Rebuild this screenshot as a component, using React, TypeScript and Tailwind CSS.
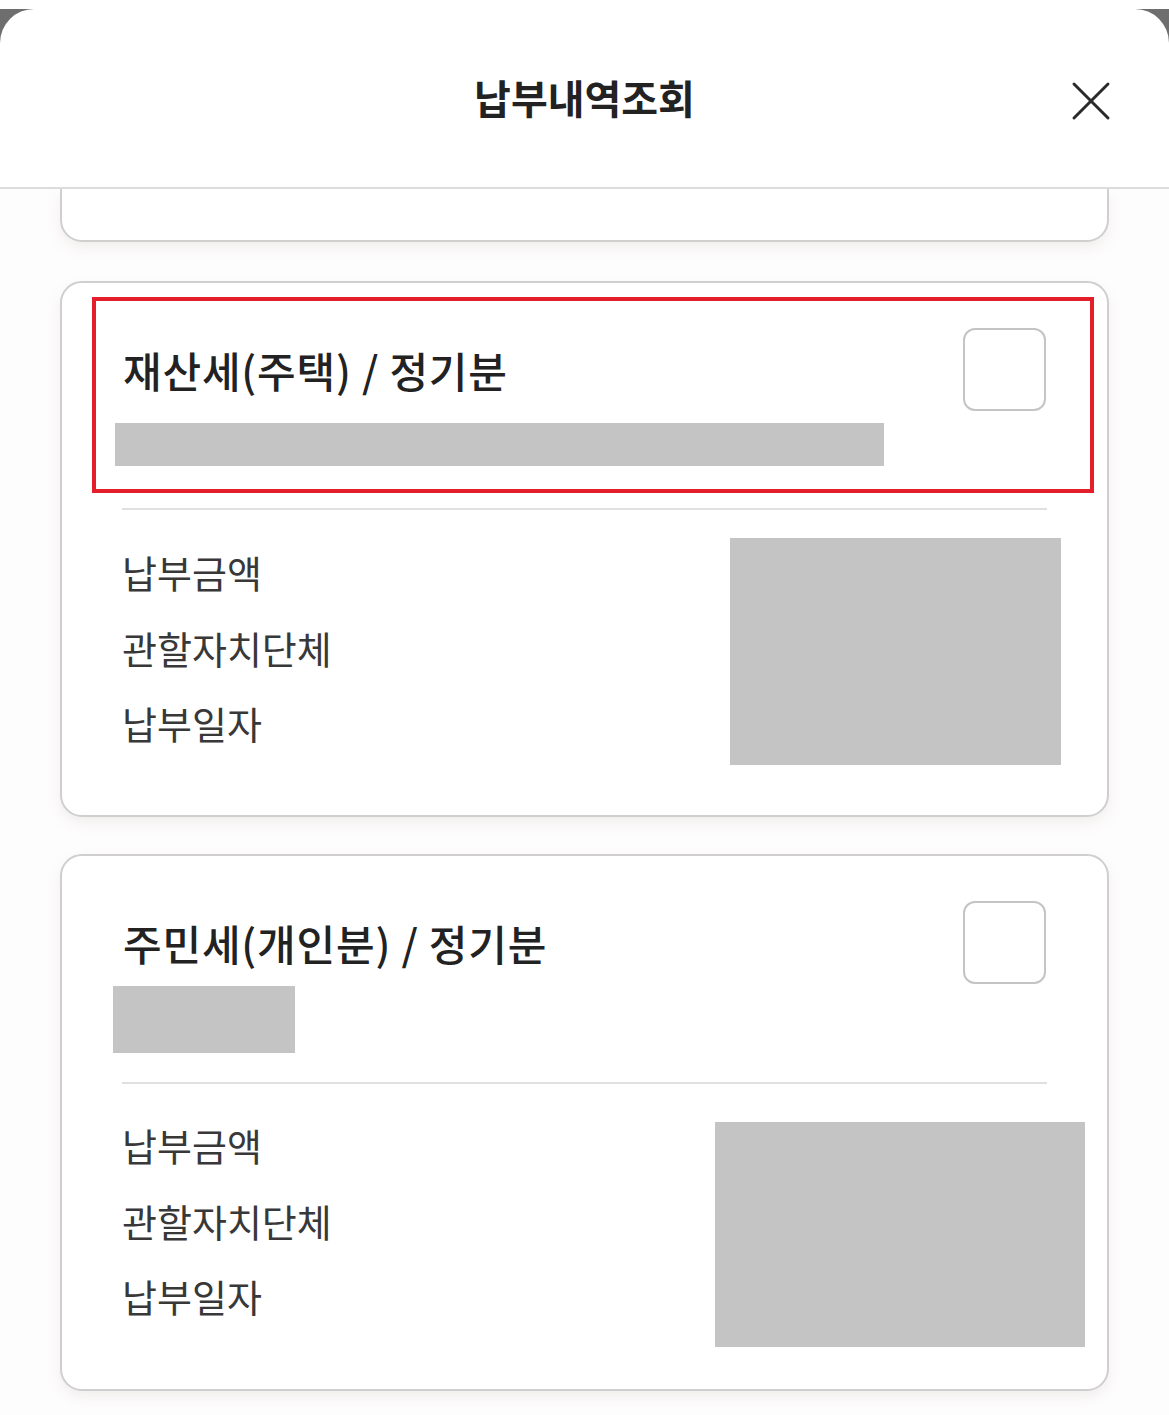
import React from "react";

const font = { fontFamily: '"Noto Sans CJK KR", "Noto Sans", sans-serif' };

function Checkbox() {
  return <div className="w-[83px] h-[83px] rounded-[12px] border-2 border-[#c4c4c4] bg-white shrink-0" />;
}

function Labels() {
  return (
    <div className="flex flex-col text-[38px] leading-[75.5px] text-[#383838]">
      <span>납부금액</span>
      <span>관할자치단체</span>
      <span>납부일자</span>
    </div>
  );
}

export default function App() {
  return (
    <div style={font} className="w-[1169px] h-[1415px] overflow-hidden bg-white">
      <div className="h-[9px] bg-white" />
      <div className="bg-[#6e6e6e]">
        <div className="bg-white rounded-t-[34px] h-[1406px] flex flex-col">
          {/* Header */}
          <div className="h-[180px] border-b-2 border-[#dcdcdc] relative flex items-center justify-center shrink-0">
            <h1 className="text-[40px] font-bold text-[#222] -mt-[2px]">납부내역조회</h1>
            <button className="absolute right-[58px] top-[72px] w-[40px] h-[40px] flex items-center justify-center">
              <svg width="40" height="40" viewBox="0 0 40 40" fill="none" stroke="#2a2a2a" strokeWidth="3" strokeLinecap="round">
                <path d="M3 3 L37 37" />
                <path d="M37 3 L3 37" />
              </svg>
            </button>
          </div>

          <div className="bg-[#fefdfd] flex-1 flex flex-col">
            {/* Card 1 partial */}
            <div className="mx-[60px] h-[53px] border-2 border-t-0 border-[#cfcfcf] rounded-b-[22px] bg-white shadow-[0_6px_14px_rgba(150,120,120,0.12)]" />

            {/* Card 2 */}
            <div className="mx-[60px] mt-[39px] border-2 border-[#cfcfcf] rounded-[22px] bg-white shadow-[0_6px_14px_rgba(150,120,120,0.12)]">
              <div className="mt-[14px] ml-[30px] mr-[13px] h-[196px] border-4 border-[#e51e2b] flex">
                <div className="flex-1 pt-[44px] pl-[19px]">
                  <div className="pl-[8px] text-[42px] leading-[50px] font-medium text-[#222] tracking-[0.8px]">재산세(주택) / 정기분</div>
                  <div className="mt-[28px] h-[43px] w-[769px] bg-[#c4c4c4]" />
                </div>
                <div className="pt-[27px] pr-[44px]">
                  <Checkbox />
                </div>
              </div>
              <div className="mx-[60px] mt-[15px] h-[2px] bg-[#e0e0e0]" />
              <div className="flex justify-between pl-[60px] pr-[46px] pb-[50px]">
                <div className="pt-[24px]">
                  <Labels />
                </div>
                <div className="mt-[28px] w-[331px] h-[227px] bg-[#c4c4c4]" />
              </div>
            </div>

            {/* Card 3 */}
            <div className="mx-[60px] mt-[37px] border-2 border-[#cfcfcf] rounded-[22px] bg-white shadow-[0_6px_14px_rgba(150,120,120,0.12)]">
              <div className="flex">
                <div className="flex-1 pt-[62px]">
                  <div className="pl-[61px] text-[42px] leading-[50px] font-medium text-[#222] tracking-[0.8px]">주민세(개인분) / 정기분</div>
                  <div className="ml-[51px] mt-[18px] h-[67px] w-[182px] bg-[#c4c4c4]" />
                </div>
                <div className="pt-[45px] pr-[61px]">
                  <Checkbox />
                </div>
              </div>
              <div className="mx-[60px] mt-[29px] h-[2px] bg-[#e0e0e0]" />
              <div className="flex justify-between pl-[60px] pr-[22px] pb-[42px]">
                <div className="pt-[23px]">
                  <Labels />
                </div>
                <div className="mt-[38px] w-[370px] h-[225px] bg-[#c4c4c4]" />
              </div>
            </div>
          </div>
        </div>
      </div>
    </div>
  );
}
